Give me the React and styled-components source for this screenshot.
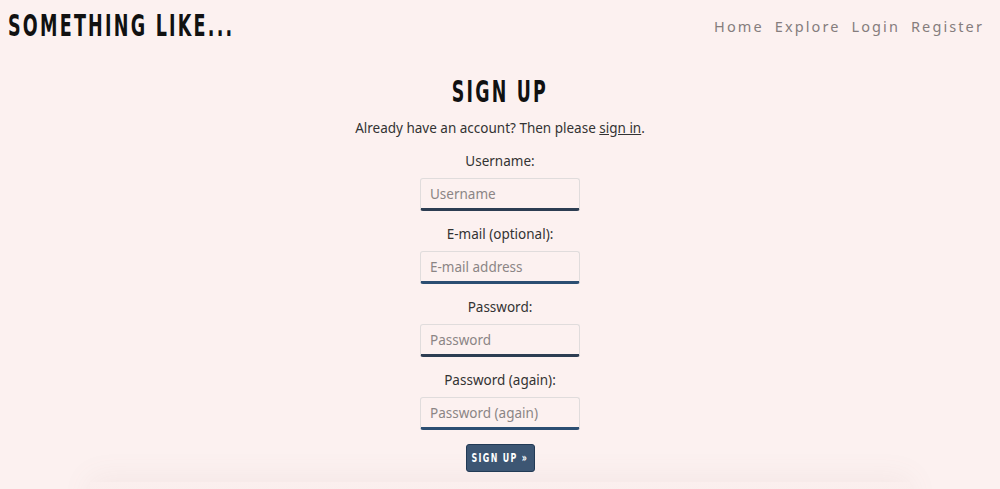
import React from "react";
import styled, { createGlobalStyle } from "styled-components";

const GlobalStyle = createGlobalStyle`
  body {
    margin: 0;
    background: #fcf1f0;
    font-family: "Noto Sans", "Open Sans", sans-serif;
    color: #333;
  }
`;

const display = `"DejaVu Sans", "Liberation Sans", sans-serif`;

const Header = styled.header`
  display: flex;
  justify-content: space-between;
  align-items: center;
  height: 50px;
  padding: 0 16px 0 8px;
`;

const Brand = styled.h1`
  margin: 0;
  font-family: ${display};
  font-weight: 700;
  font-size: 30px;
  letter-spacing: 3.8px;
  color: #111;
  transform: scaleX(0.585);
  transform-origin: left center;
  white-space: nowrap;
`;

const Nav = styled.nav`
  display: flex;
  gap: 11px;
  padding-top: 2px;
`;

const NavLink = styled.a`
  font-size: 14.5px;
  letter-spacing: 2.1px;
  color: #857d7d;
  text-decoration: none;
`;

const Main = styled.main`
  display: flex;
  flex-direction: column;
  align-items: center;
  padding-top: 25px;
`;

const Title = styled.h2`
  margin: 0 0 10px;
  font-family: ${display};
  font-weight: 700;
  font-size: 30px;
  line-height: 34px;
  letter-spacing: 3.8px;
  color: #111;
  transform: scaleX(0.58);
`;

const Lead = styled.p`
  margin: 0 0 15px;
  font-size: 13.5px;
  color: #333;
  a {
    color: #333;
  }
`;

const Form = styled.form`
  display: flex;
  flex-direction: column;
  align-items: center;
`;

const Label = styled.label`
  font-size: 13.5px;
  line-height: 18px;
  margin-bottom: 8px;
  color: #333;
`;

const Input = styled.input`
  box-sizing: border-box;
  width: 160px;
  height: 33px;
  padding: 0 9px;
  margin-bottom: 14px;
  border: 1px solid #e0dcdc;
  border-bottom: 3px solid ${p => p.$dark ? "#2c3d52" : "#2b4e72"};
  border-radius: 3px;
  background: #fcf1f0;
  font-family: inherit;
  font-size: 13.5px;
  color: #333;
  &::placeholder {
    color: #8b8585;
  }
`;

const Button = styled.button`
  width: 69px;
  height: 28px;
  padding: 0;
  border: 1px solid #223a55;
  border-radius: 3px;
  background: #3d5673;
  color: #fff;
  display: flex;
  align-items: center;
  justify-content: center;
`;

const ButtonText = styled.span`
  display: inline-block;
  font-family: ${display};
  font-weight: 700;
  font-size: 12px;
  letter-spacing: 2px;
  white-space: nowrap;
  transform: scaleX(0.66);
`;

const Footer = styled.footer`
  margin: 10px 90px 0;
  height: 80px;
  background: linear-gradient(#fbefee, #f4e8e7);
  box-shadow: 0 -4px 30px rgba(150, 110, 110, 0.08);
`;

const fields = [
  { label: "Username:", ph: "Username", dark: true },
  { label: "E-mail (optional):", ph: "E-mail address" },
  { label: "Password:", ph: "Password", dark: true, type: "password" },
  { label: "Password (again):", ph: "Password (again)", type: "password" },
];

export default function App() {
  return (
    <>
      <GlobalStyle />
      <Header>
        <Brand>SOMETHING LIKE...</Brand>
        <Nav>
          <NavLink href="#">Home</NavLink>
          <NavLink href="#">Explore</NavLink>
          <NavLink href="#">Login</NavLink>
          <NavLink href="#">Register</NavLink>
        </Nav>
      </Header>
      <Main>
        <Title>SIGN UP</Title>
        <Lead>
          Already have an account? Then please <a href="#">sign in</a>.
        </Lead>
        <Form onSubmit={e => e.preventDefault()}>
          {fields.map(f => (
            <React.Fragment key={f.ph}>
              <Label>{f.label}</Label>
              <Input placeholder={f.ph} type={f.type || "text"} $dark={f.dark} />
            </React.Fragment>
          ))}
          <Button type="submit">
            <ButtonText>SIGN UP »</ButtonText>
          </Button>
        </Form>
      </Main>
      <Footer />
    </>
  );
}
